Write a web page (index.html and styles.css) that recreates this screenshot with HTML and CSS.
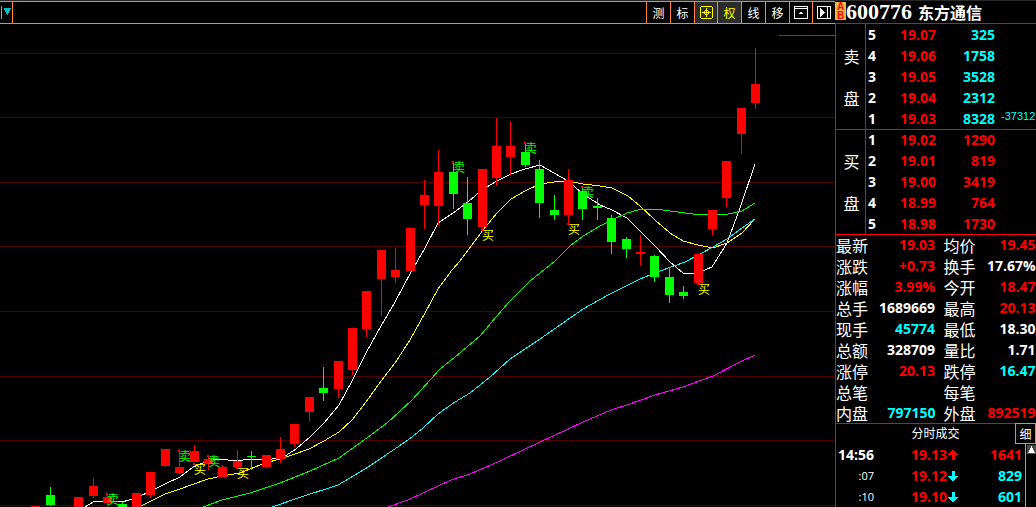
FILE: index.html
```html
<!DOCTYPE html>
<html lang="zh-CN">
<head>
<meta charset="utf-8">
<meta name="viewport" content="width=device-width, initial-scale=1">
<title>600776 东方通信</title>
<link rel="stylesheet" href="styles.css">
</head>
<body>
<div class="terminal">
  <main class="chart-pane">
    <header class="toolbar">
      <button class="menu-toggle" type="button" aria-label="菜单">
        <svg width="12" height="21" viewBox="0 0 12 21" shape-rendering="crispEdges"><path d="M1 4h1v13H1z" fill="#ff8040"/><path d="M4 6h7v1h-1v2H9v2H8v2H7v-1H6v-2H5V8H4z" fill="#00c0c8"/></svg>
      </button>
      <nav class="tools">
        <button class="tool" type="button">测</button>
        <button class="tool" type="button">标</button>
        <button class="tool tool-icon active" type="button" aria-label="十字光标">
          <svg width="13" height="13" viewBox="0 0 13 13" shape-rendering="crispEdges" fill="none" stroke="#ffff00"><path d="M1 .5h11M1 12.5h11M.5 1v11M12.5 1v11M2 6.5h9M6.5 2v9M5 4.5h3M5 8.5h3M4.5 5v3M8.5 5v3"/></svg>
        </button>
        <button class="tool active" type="button">权</button>
        <button class="tool" type="button">线</button>
        <button class="tool" type="button">移</button>
        <button class="tool tool-icon" type="button" aria-label="收起">
          <svg width="14" height="13" viewBox="0 0 14 13" shape-rendering="crispEdges" fill="none" stroke="#fff"><path d="M.5.5h13v12H.5zM1 2.5h12M6 6.5h2M5 7.5h4"/></svg>
        </button>
        <button class="tool tool-icon" type="button" aria-label="展开右侧">
          <svg width="14" height="13" viewBox="0 0 14 13" shape-rendering="crispEdges"><path d="M.5.5h13v12H.5zM10.5 1v11" fill="none" stroke="#fff"/><path d="M3 2h1v1h1v1h1v1h1v1h1v1H7v1H6v1H5v1H4v1H3z" fill="#fff"/></svg>
        </button>
      </nav>
    </header>
    <svg class="chart" viewBox="0 24 835 483" preserveAspectRatio="xMinYMin slice" role="img" aria-label="日K线图">
      <g class="grid"><path d="M0 53.5h835M0 117.5h835M0 182.5h835M0 246.5h835M0 311.5h835M0 376.5h835M0 440.5h835M0 505.5h835"/></g>
      <path class="limit" d="M779 35.5h56"/>
      <g class="averages">
        <polyline class="ma5" points="85,507 93,502 107,501 122,502 136,498 155,489 165,484 180,477 193,467 208,461 219,459 236,461 250,459 262,460 282,458 296,449 310,437 324,423 339,405 352,381 366,353 381,326 395,302 411,272 425,248 438,223 453,213 468,202 482,190 497,181 511,174 525,169 540,165 554,173 568,181 583,194 600,205 612,210 627,218 640,231 655,246 670,262 683,273 695,274 712,267 727,243 740,208 755,164"/>
        <polyline class="ma10" points="141,506 165,494 180,489 208,479 222,476 240,473 250,469 265,463 280,459 295,454 309,449 324,441 339,432 352,420 366,402 381,381 395,363 410,340 425,313 438,289 452,270 460,261 483,230 497,213 511,199 525,191 540,184 554,182 567,181 583,184 600,186 612,188 628,196 640,206 655,220 670,233 683,241 698,245 713,248 727,243 742,233 755,219"/>
        <polyline class="ma20" points="203,507 222,500 250,493 280,483 310,471 339,458 364,440 387,423 412,400 440,369 455,357 480,336 508,303 530,281 555,261 570,246 583,236 600,226 612,220 627,213 638,210 655,209 670,211 693,214 728,214 742,211 755,203"/>
        <polyline class="ma30" points="272,507 298,498 338,485 365,469 380,459 408,440 423,428 438,414 455,402 470,393 490,377 510,359 540,339 583,309 610,294 640,279 660,271 685,262 713,247 727,239 742,228 755,219"/>
        <polyline class="ma60" points="388,507 408,500 425,492 451,480 470,474 500,461 525,449 566,430 583,422 611,410 627,405 655,395 683,387 713,376 740,362 755,355"/>
      </g>
      <g class="up">
        <path d="M31 506h9v1h-9zM74 497h9v10h-9zM89 486h9v10h-9zM93 478h1v20h-1zM103 497h9v6h-9zM107 494h1v13h-1zM132 493h9v14h-9zM146 472h9v23h-9zM150 495h1v3h-1zM161 449h9v17h-9zM165 466h1v1h-1zM175 467h9v6h-9zM179 450h1v24h-1zM190 451h9v11h-9zM194 445h1v17h-1zM204 459h9v5h-9zM208 457h1v13h-1zM218 467h9v10h-9zM222 465h1v2h-1zM233 461h9v6h-9zM237 450h1v19h-1zM262 455h9v12h-9zM266 467h1v1h-1zM276 449h9v10h-9zM280 437h1v26h-1zM290 424h9v20h-9zM294 444h1v3h-1zM305 397h9v15h-9zM309 412h1v9h-1z"/>
        <path d="M334 361h9v28h-9zM338 389h1v9h-1zM348 328h9v42h-9zM352 370h1v5h-1zM362 291h9v38h-9zM366 329h1v8h-1zM377 250h9v29h-9zM381 279h1v37h-1zM391 270h9v7h-9zM395 248h1v35h-1zM406 228h9v43h-9zM420 195h9v10h-9zM424 180h1v49h-1zM434 172h9v34h-9zM438 150h1v75h-1zM478 169h9v58h-9zM482 227h1v4h-1zM492 146h9v32h-9zM496 118h1v68h-1zM506 146h9v11h-9zM510 122h1v53h-1zM564 180h9v35h-9zM568 169h1v55h-1z"/>
        <path d="M636 252h9v2h-9zM640 235h1v31h-1zM694 254h9v29h-9zM708 210h9v19h-9zM712 229h1v6h-1zM722 161h9v37h-9zM726 198h1v9h-1zM737 108h9v26h-9zM741 134h1v20h-1zM751 84h9v19h-9zM755 48h1v61h-1z"/>
        <path d="M106 493h2v2h-2zM178 450h2v2h-2zM193 463h2v2h-2zM207 455h2v2h-2zM236 467h2v2h-2zM452 161h2v2h-2zM481 229h2v2h-2zM524 142h2v2h-2zM567 223h2v2h-2zM581 186h2v2h-2zM697 283h2v2h-2z"/>
      </g>
      <g class="down">
        <path d="M46 495h9v10h-9zM50 487h1v19h-1zM118 504h9v3h-9zM122 502h1v2h-1zM247 456h9v1h-9zM251 451h1v19h-1zM319 388h9v5h-9zM323 367h1v34h-1zM449 172h9v22h-9zM453 163h1v46h-1zM463 203h9v16h-9zM467 177h1v58h-1zM521 152h9v13h-9zM525 144h1v23h-1zM535 169h9v34h-9zM539 160h1v58h-1zM550 210h9v5h-9zM554 195h1v25h-1zM578 191h9v18h-9zM582 188h1v32h-1zM593 206h9v2h-9zM597 198h1v22h-1z"/>
        <path d="M607 218h9v24h-9zM611 215h1v39h-1zM622 239h9v10h-9zM626 237h1v21h-1zM650 256h9v21h-9zM654 255h1v27h-1zM665 277h9v18h-9zM669 267h1v36h-1zM679 292h9v4h-9zM683 286h1v13h-1z"/>
      </g>
      <g class="sell">
        <text x="107" y="504">卖</text><text x="179" y="461">卖</text><text x="208" y="466">卖</text>
        <text x="453" y="172">卖</text><text x="525" y="153">卖</text><text x="582" y="197">卖</text>
      </g>
      <g class="buy">
        <text x="194" y="474">买</text><text x="237" y="478">买</text><text x="482" y="240">买</text>
        <text x="568" y="234">买</text><text x="698" y="294">买</text>
      </g>
    </svg>
  </main>

  <aside class="quote-pane">
    <header class="stock">
      <span class="badge"><span>A</span><span>B</span></span>
      <h1 class="stock-title"><span class="code">600776</span><span class="name">东方通信</span></h1>
    </header>

    <section class="book">
      <div class="side"><span>卖</span><span>盘</span></div>
      <table class="levels asks">
        <tr><th scope="row">5</th><td class="price red">19.07</td><td class="vol">325</td><td class="delta"></td></tr>
        <tr><th scope="row">4</th><td class="price red">19.06</td><td class="vol">1758</td><td class="delta"></td></tr>
        <tr><th scope="row">3</th><td class="price red">19.05</td><td class="vol">3528</td><td class="delta"></td></tr>
        <tr><th scope="row">2</th><td class="price red">19.04</td><td class="vol">2312</td><td class="delta"></td></tr>
        <tr><th scope="row">1</th><td class="price red">19.03</td><td class="vol">8328</td><td class="delta">-37312</td></tr>
      </table>
    </section>
    <section class="book">
      <div class="side"><span>买</span><span>盘</span></div>
      <table class="levels bids">
        <tr><th scope="row">1</th><td class="price red">19.02</td><td class="vol">1290</td><td class="delta"></td></tr>
        <tr><th scope="row">2</th><td class="price red">19.01</td><td class="vol">819</td><td class="delta"></td></tr>
        <tr><th scope="row">3</th><td class="price red">19.00</td><td class="vol">3419</td><td class="delta"></td></tr>
        <tr><th scope="row">4</th><td class="price red">18.99</td><td class="vol">764</td><td class="delta"></td></tr>
        <tr><th scope="row">5</th><td class="price red">18.98</td><td class="vol">1730</td><td class="delta"></td></tr>
      </table>
    </section>

    <table class="stats">
      <tr><th scope="row">最新</th><td class="first red">19.03</td><th scope="row" class="second">均价</th><td class="red">19.45</td></tr>
      <tr><th scope="row">涨跌</th><td class="red">+0.73</td><th scope="row" class="second">换手</th><td>17.67%</td></tr>
      <tr><th scope="row">涨幅</th><td class="red">3.99%</td><th scope="row" class="second">今开</th><td class="red">18.47</td></tr>
      <tr><th scope="row">总手</th><td>1689669</td><th scope="row" class="second">最高</th><td class="red">20.13</td></tr>
      <tr><th scope="row">现手</th><td class="cyan">45774</td><th scope="row" class="second">最低</th><td>18.30</td></tr>
      <tr><th scope="row">总额</th><td>328709</td><th scope="row" class="second">量比</th><td>1.71</td></tr>
      <tr><th scope="row">涨停</th><td class="red">20.13</td><th scope="row" class="second">跌停</th><td class="cyan">16.47</td></tr>
      <tr><th scope="row">总笔</th><td></td><th scope="row" class="second">每笔</th><td></td></tr>
      <tr><th scope="row">内盘</th><td class="cyan">797150</td><th scope="row" class="second">外盘</th><td class="red">892519</td></tr>
    </table>

    <section class="ticks">
      <header class="ticks-head">
        <h2>分时成交</h2>
        <button class="detail" type="button">细</button>
      </header>
      <div class="ticks-body">
        <table class="tick-list">
          <tr><td class="time full">14:56</td><td class="price red">19.13</td><td class="dir red"><svg width="10" height="10" viewBox="0 0 10 10" shape-rendering="crispEdges"><path d="M4 0h2v1h1v1h1v1h1v1h1v1H7v5H4V5H0V4h1V3h1V2h1V1h1z" fill="currentColor"/></svg></td><td class="red">1641</td></tr>
          <tr><td class="time">:07</td><td class="price red">19.12</td><td class="dir cyan"><svg width="10" height="10" viewBox="0 0 10 10" shape-rendering="crispEdges"><path d="M4 10h2V9h1V8h1V7h1V6h1V5H7V0H4v5H0v1h1v1h1v1h1v1h1z" fill="currentColor"/></svg></td><td class="cyan">829</td></tr>
          <tr><td class="time">:10</td><td class="price red">19.10</td><td class="dir cyan"><svg width="10" height="10" viewBox="0 0 10 10" shape-rendering="crispEdges"><path d="M4 10h2V9h1V8h1V7h1V6h1V5H7V0H4v5H0v1h1v1h1v1h1v1h1z" fill="currentColor"/></svg></td><td class="cyan">601</td></tr>
        </table>
        <div class="scroll">
          <button class="scroll-up" type="button" aria-label="向上滚动"><svg width="9" height="9" viewBox="0 0 9 9" shape-rendering="crispEdges"><path d="M0 0h9v9H0z" fill="#484848"/><path d="M4 1h1v2h1v2h1v2h1v1H1V7h1V5h1V3h1z" fill="#fff"/></svg></button>
        </div>
      </div>
    </section>
  </aside>
</div>
</body>
</html>
```

FILE: styles.css
```css
:root {
  --orange: #ff8040;
  --red: #ff0000;
  --cyan: #00ffff;
  --num: "Open Sans", "Noto Sans", sans-serif;
  --cjk: "Noto Sans CJK SC", sans-serif;
}

* { box-sizing: border-box; }

body {
  margin: 0;
  background: #000;
  color: #fff;
  font-family: var(--cjk);
  font-size: 16px;
}

button {
  margin: 0;
  padding: 0;
  border: 0;
  background: none;
  color: inherit;
  font-family: var(--cjk);
  font-size: 12px;
  line-height: 1;
}

svg { display: block; }

table {
  border-collapse: collapse;
  table-layout: fixed;
  width: 100%;
}

td, th {
  height: 21px;
  padding: 0;
  line-height: 20px;
  vertical-align: middle;
  white-space: nowrap;
}

.red { color: var(--red); }
.cyan { color: var(--cyan); }

.terminal {
  display: grid;
  grid-template-columns: minmax(0, 1fr) 201px;
  height: 100vh;
  overflow: hidden;
  border-top: 1px solid #282828;
}

/* Chart side */
.chart-pane {
  display: flex;
  flex-direction: column;
  min-width: 0;
  min-height: 0;
}

.toolbar {
  display: flex;
  flex: none;
  justify-content: space-between;
  height: 23px;
  border-top: 1px solid var(--orange);
  border-bottom: 1px solid var(--orange);
}

.menu-toggle { border-right: 1px solid var(--orange); }

.tools { display: flex; }

.tool {
  display: flex;
  align-items: center;
  justify-content: center;
  width: 24px;
  border-left: 1px solid var(--orange);
}

.tool-icon { width: 23px; }

.tool.active {
  background: #2c2c2c;
  color: #ffff00;
}

.chart {
  flex: 1;
  width: 100%;
  min-height: 0;
}

.grid { stroke: #500000; shape-rendering: crispEdges; }
.limit { stroke: var(--red); shape-rendering: crispEdges; }
.averages { fill: none; stroke-width: 1; shape-rendering: crispEdges; }
.ma5 { stroke: #fff; }
.ma10 { stroke: #ffff00; }
.ma20 { stroke: #00ff00; }
.ma30 { stroke: #00ffff; }
.ma60 { stroke: #ff00ff; }
.up { fill: #ff0000; shape-rendering: crispEdges; }
.down { fill: #00ff00; shape-rendering: crispEdges; }
.sell, .buy { font-size: 12px; }
.sell { fill: #00ff00; }
.buy { fill: #ffff00; }

/* Quote side */
.quote-pane {
  display: flex;
  flex-direction: column;
  min-height: 0;
  font-size: 14px;
}

.quote-pane > :not(.stock) { border-left: 1px solid var(--red); }

.stock {
  display: flex;
  flex: none;
  align-items: flex-start;
  height: 23px;
  border-bottom: 1px solid var(--red);
}

.badge {
  display: flex;
  flex-direction: column;
  width: 11px;
  height: 18px;
  margin-top: 1px;
  background: #f0b840;
  color: var(--red);
  font: bold 10px/9px "Liberation Sans", sans-serif;
  text-align: center;
}

.stock-title {
  display: flex;
  align-items: center;
  gap: 6px;
  height: 22px;
  margin: 0;
  white-space: nowrap;
}

.code { font: bold 22px/22px "Liberation Serif", serif; }
.name { font: bold 16px/22px var(--cjk); }

.book {
  display: grid;
  flex: none;
  grid-template-columns: 30px minmax(0, 1fr);
  height: 105px;
}

.book + .book, .stats, .ticks { box-shadow: inset 0 1px var(--red); }

.side {
  display: flex;
  flex-direction: column;
  justify-content: center;
  padding-left: 2px;
  border-right: 1px solid var(--red);
  font-size: 16px;
  line-height: 42px;
  text-align: center;
}

.levels th { width: 12px; padding-left: 2px; text-align: left; }
.levels th, .levels td { font-family: var(--num); font-weight: bold; }
.levels td { text-align: right; }
.levels .price { width: 58px; }
.levels .vol { width: 59px; }
.levels .delta {
  padding-left: 6px;
  color: var(--cyan);
  font: 11px/16px "Liberation Sans", sans-serif;
  text-align: left;
  vertical-align: top;
}
.asks .vol { color: var(--cyan); }
.bids .vol { color: var(--red); }

.stats { flex: none; }
.stats th { width: 32px; font-size: 16px; font-weight: normal; text-align: left; }
.stats .second { width: 40px; padding-left: 8px; }
.stats .first { width: 68px; }
.stats td { font-family: var(--num); font-weight: bold; text-align: right; }

.ticks {
  display: flex;
  flex: 1;
  flex-direction: column;
  min-height: 0;
}

.ticks-head {
  display: grid;
  flex: none;
  grid-template-columns: 20px 1fr 21px;
  height: 21px;
}

.ticks-head h2 {
  grid-column: 2;
  margin: 0;
  font-size: 12px;
  font-weight: normal;
  line-height: 20px;
  text-align: center;
}

.detail { border: 1px solid var(--orange); }

.ticks-body {
  display: grid;
  flex: 1;
  grid-template-columns: minmax(0, 1fr) 11px;
  min-height: 0;
}

.tick-list { align-self: start; }
.tick-list td { font-family: var(--num); font-weight: bold; text-align: right; }
.tick-list .time { width: 38px; font-size: 11px; font-weight: normal; }
.tick-list .full { font-size: 14px; font-weight: bold; }
.tick-list .price { width: 73px; }
.tick-list .dir { width: 12px; padding-left: 1px; }
.tick-list td:last-child { padding-right: 3px; }

.scroll { border-left: 1px solid var(--orange); }
.scroll-up { display: block; padding: 1px 0 0 1px; }
```
